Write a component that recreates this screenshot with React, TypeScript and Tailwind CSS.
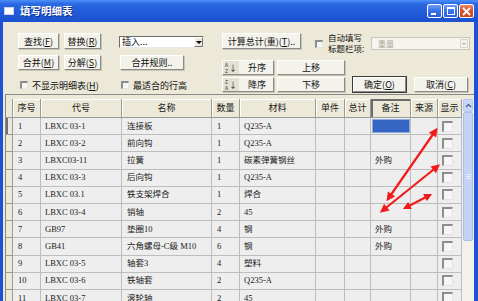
import type { ReactNode } from 'react';

const GRID = 'grid grid-cols-[7px_28px_81px_90px_28px_76px_29px_26px_40px_27px_24px]';

const rows = [
  ['1', 'LBXC 03-1', '连接板', '1', 'Q235-A', ''],
  ['2', 'LBXC 03-2', '前向钩', '1', 'Q235-A', ''],
  ['3', 'LBXC03-11', '拉簧', '1', '碳素弹簧钢丝', '外购'],
  ['4', 'LBXC 03-3', '后向钩', '1', 'Q235-A', ''],
  ['5', 'LBXC 03.1', '铁支架焊合', '1', '焊合', ''],
  ['6', 'LBXC 03-4', '销轴', '2', '45', ''],
  ['7', 'GB97', '垫圈10', '4', '钢', '外购'],
  ['8', 'GB41', '六角螺母-C级 M10', '6', '钢', '外购'],
  ['9', 'LBXC 03-5', '轴套3', '4', '塑料', ''],
  ['10', 'LBXC 03-6', '铁轴套', '2', 'Q235-A', ''],
  ['11', 'LBXC 03-7', '滚轮轴', '2', '45', ''],
];

const headers = ['序号', '代号', '名称', '数量', '材料', '单件', '总计', '备注', '来源', '显示'];

function Btn({ className = '', children, def = false }: { className?: string; children: ReactNode; def?: boolean }) {
  return (
    <div
      className={`flex shrink-0 items-center justify-center whitespace-nowrap bg-[#f3f2eb] border border-t-white border-l-white border-r-[#8a8a8a] border-b-[#8a8a8a] text-[9px] leading-none text-[#111] ${def ? 'shadow-[0_0_0_1px_#3a3a3a]' : 'shadow-[1px_1px_0_#c9c6b6]'} ${className}`}
    >
      {children}
    </div>
  );
}

function Acc({ k }: { k: string }) {
  return (
    <span>
      (<span className="underline">{k}</span>)
    </span>
  );
}

function Check({ className = '' }: { className?: string }) {
  return (
    <div
      className={`shrink-0 bg-[#f6f6f4] border-t-2 border-l-2 border-b border-r border-t-[#8d8d8d] border-l-[#8d8d8d] border-b-[#e4e4e4] border-r-[#e4e4e4] ${className}`}
    />
  );
}

function SortBtn({ up, label }: { up: boolean; label: string }) {
  return (
    <Btn className="w-[52px] h-[15px] justify-start">
      <div className="flex h-full w-[16px] items-center justify-center bg-[#e3e1d6]">
        <div className="flex flex-col items-center text-[5px] leading-[6px] text-[#333]">
          <span>{up ? 'A' : 'Z'}</span>
          <span>{up ? 'Z' : 'A'}</span>
        </div>
        <span className="ml-[1px] text-[8px] leading-none text-[#222]">↓</span>
      </div>
      <span className="ml-[9px]">{label}</span>
    </Btn>
  );
}

function TitleBtn({ kind }: { kind: 'min' | 'max' | 'close' }) {
  const bg =
    kind === 'close'
      ? 'bg-[linear-gradient(180deg,#ec8a6a_0%,#e0562e_40%,#c9441f_100%)]'
      : 'bg-[linear-gradient(180deg,#6d9cf8_0%,#3b74ea_45%,#2a5fdc_100%)]';
  return (
    <div className={`relative flex h-[14px] w-[15px] items-center justify-center rounded-[2px] border border-white ${bg}`}>
      {kind === 'min' && <div className="mt-[6px] mr-[3px] h-[2px] w-[5px] bg-white" />}
      {kind === 'max' && <div className="h-[8px] w-[8px] border border-t-2 border-white" />}
      {kind === 'close' && (
        <svg width="9" height="9" viewBox="0 0 9 9">
          <path d="M1 1 L8 8 M8 1 L1 8" stroke="white" strokeWidth="1.8" />
        </svg>
      )}
    </div>
  );
}

export default function App() {
  return (
    <div className="relative h-[301px] w-[478px] overflow-hidden bg-[#1d52d6] font-['Noto_Sans_CJK_SC',sans-serif]">
      {/* title bar */}
      <div className="flex h-[22px] items-center bg-[linear-gradient(180deg,#4d90f8_0%,#2b68e2_18%,#2159d8_60%,#1c51cf_100%)] px-[4px]">
        <div className="mr-[6px] h-[8px] w-[10px] border border-[#c9d4e8] bg-white" />
        <span className="text-[10.5px] font-bold text-white [text-shadow:1px_1px_0_#0c2f8a]">填写明细表</span>
        <div className="ml-auto flex gap-[1px]">
          <TitleBtn kind="min" />
          <TitleBtn kind="max" />
          <TitleBtn kind="close" />
        </div>
      </div>

      {/* body */}
      <div className="ml-[3px] mr-[4px] flex h-[279px] flex-col bg-[#ece9d8]">
        <div className="flex h-[72px] shrink-0 pl-[15px] pt-[11px]">
          {/* left block */}
          <div className="flex w-[187px] flex-col">
            <div className="flex h-[16px]">
              <Btn className="w-[41px] h-[16px]">
                查找<Acc k="F" />
              </Btn>
              <Btn className="ml-[5px] w-[37px] h-[16px]">
                替换<Acc k="R" />
              </Btn>
              <div className="ml-[18px] mt-[3px] flex h-[12px] w-[85px] border border-t-[#6e6e6e] border-l-[#6e6e6e] border-b-[#e8e8e8] border-r-[#e8e8e8] bg-white">
                <span className="flex-1 pl-[2px] text-[9px] leading-[10px] text-[#111]">插入...</span>
                <div className="flex w-[9px] items-center justify-center border border-t-white border-l-white border-b-[#7a7a7a] border-r-[#7a7a7a] bg-[#ece9d8]">
                  <div className="h-0 w-0 border-x-[3px] border-t-[3px] border-x-transparent border-t-black" />
                </div>
              </div>
            </div>
            <div className="mt-[6px] flex h-[15px]">
              <Btn className="w-[41px] h-[15px]">
                合并<Acc k="M" />
              </Btn>
              <Btn className="ml-[5px] w-[37px] h-[15px]">
                分解<Acc k="S" />
              </Btn>
              <Btn className="ml-[19px] w-[64px] h-[15px]">合并规则..</Btn>
            </div>
            <div className="mt-[10px] flex h-[10px] items-center text-[9px] leading-none text-[#111]">
              <div className="flex w-[101px] items-center">
                <Check className="ml-[2px] h-[8px] w-[8px]" />
                <span className="ml-[4px]">
                  不显示明细表<Acc k="H" />
                </span>
              </div>
              <Check className="ml-[2px] h-[8px] w-[8px]" />
              <span className="ml-[4px]">最适合的行高</span>
            </div>
          </div>

          {/* right block */}
          <div className="ml-[17px] flex flex-col">
            <div className="flex h-[16px] items-start">
              <Btn className="w-[79px] h-[16px]">
                计算总计(重)<Acc k="T" />..
              </Btn>
              <Check className="ml-[14px] mt-[7px] h-[8px] w-[8px]" />
              <div className="-mt-[1px] ml-[5px] w-[43px] text-[8.5px] leading-[11px] text-[#111]">
                <div>自动填写</div>
                <div>标题栏项:</div>
              </div>
              <div className="mt-[4px] flex h-[13px] w-[99px] border border-[#c9c7ba] bg-[#f5f4ef]">
                <span className="flex-1 pl-[6px] text-[8px] leading-[11px] text-[#aca899]">重量</span>
                <div className="m-[1px] flex w-[8px] items-center justify-center border border-[#d8d6cb] bg-[#f2f1ec]">
                  <div className="h-0 w-0 border-x-[2px] border-t-[2px] border-x-transparent border-t-[#b0ae9f]" />
                </div>
              </div>
            </div>
            <div className="mt-[11px] flex h-[15px]">
              <SortBtn up label="升序" />
              <Btn className="ml-[3px] w-[68px] h-[15px]">上移</Btn>
            </div>
            <div className="mt-[2px] flex h-[15px]">
              <SortBtn up={false} label="降序" />
              <Btn className="ml-[3px] w-[68px] h-[15px]">下移</Btn>
              <Btn def className="ml-[8px] w-[53px] h-[15px]">
                确定<Acc k="O" />
              </Btn>
              <Btn className="ml-[8px] w-[54px] h-[15px]">
                取消<Acc k="C" />
              </Btn>
            </div>
          </div>
        </div>

        {/* grid */}
        <div className="ml-[2px] flex flex-1 overflow-hidden border-t border-l border-[#8a8a8a] pt-[4px]">
          <div className="flex w-[456px] flex-col font-['Liberation_Serif','Noto_Sans_CJK_SC',serif] text-[8.5px] text-[#1a1a1a]">
            <div className={`${GRID} h-[19px] shrink-0`}>
              <div className="border-r border-b border-[#9a9a9a] bg-[#ece9d8]" />
              {headers.map((h) => (
                <div
                  key={h}
                  className={`flex items-center justify-center border-r border-b border-[#9a9a9a] bg-[#ece9d8] font-['Noto_Sans_CJK_SC',sans-serif] text-[9px] ${h === '备注' ? 'shadow-[inset_2px_2px_0_#6c6c6c]' : 'shadow-[inset_1px_1px_0_#ffffff]'}`}
                >
                  {h}
                </div>
              ))}
            </div>
            {rows.map((r, i) => (
              <div key={r[0]} className={`${GRID} h-[17.2px] shrink-0`}>
                <div className={`border-r border-b border-[#9a9a9a] bg-[#ece9d8] ${i === 0 ? 'shadow-[inset_2px_0_0_#707070]' : ''}`} />
                <div className="flex items-center border-r border-b border-[#bdbdbd] bg-[#eeeeee] pl-[5px]">{r[0]}</div>
                <div className="flex items-center border-r border-b border-[#bdbdbd] bg-[#eeeeee] pl-[4px] whitespace-nowrap">{r[1]}</div>
                <div className="flex items-center border-r border-b border-[#bdbdbd] bg-[#eeeeee] pl-[5px] whitespace-nowrap">{r[2]}</div>
                <div className="flex items-center border-r border-b border-[#bdbdbd] bg-[#eeeeee] pl-[5px]">{r[3]}</div>
                <div className="flex items-center border-r border-b border-[#bdbdbd] bg-[#eeeeee] pl-[4px] whitespace-nowrap">{r[4]}</div>
                <div className="border-r border-b border-[#bdbdbd] bg-[#eeeeee]" />
                <div className="border-r border-b border-[#bdbdbd] bg-[#eeeeee]" />
                <div className="flex items-center border-r border-b border-[#bdbdbd] bg-[#eeeeee] pl-[4px]">
                  {i === 0 ? <div className="-ml-[3px] h-[14px] w-[38px] border border-[#8fa9dc] bg-[#3666c4]" /> : r[5]}
                </div>
                <div className="border-r border-b border-[#bdbdbd] bg-[#eeeeee]" />
                <div className="flex items-center border-r border-b border-[#bdbdbd] bg-[#eeeeee] pl-[4px]">
                  <Check className="h-[11px] w-[11px]" />
                </div>
              </div>
            ))}
          </div>

          {/* scrollbar */}
          <div className="flex w-[12px] flex-col bg-[#f3f1ea]">
            <div className="mx-[1px] flex h-[13px] shrink-0 items-center justify-center rounded-[2px] border border-[#b4c6ef] bg-[#c7d7fb]">
              <svg width="7" height="5" viewBox="0 0 7 5">
                <path d="M1 4 L3.5 1.5 L6 4" fill="none" stroke="#4d6185" strokeWidth="1.4" />
              </svg>
            </div>
            <div className="mx-[1px] flex h-[129px] shrink-0 flex-col items-center justify-center gap-[1px] rounded-[2px] border border-[#a9bde9] bg-[#c4d4f8]">
              <div className="h-[1px] w-[5px] bg-[#eef3ff]" />
              <div className="h-[1px] w-[5px] bg-[#eef3ff]" />
              <div className="h-[1px] w-[5px] bg-[#eef3ff]" />
            </div>
          </div>
        </div>
      </div>

      {/* red annotation arrows */}
      <svg className="pointer-events-none absolute inset-0" width="478" height="301" viewBox="0 0 478 301">
        <defs>
          <marker id="ah" viewBox="0 0 10 10" refX="7" refY="5" markerWidth="4.5" markerHeight="4" orient="auto-start-reverse">
            <path d="M0 0 L10 5 L0 10 z" fill="#f21b1b" />
          </marker>
        </defs>
        <line x1="388" y1="199" x2="436" y2="130" stroke="#f21b1b" strokeWidth="2.2" markerStart="url(#ah)" markerEnd="url(#ah)" />
        <line x1="382" y1="211" x2="438" y2="166" stroke="#f21b1b" strokeWidth="2.2" markerStart="url(#ah)" markerEnd="url(#ah)" />
        <line x1="405" y1="208" x2="430" y2="195" stroke="#f21b1b" strokeWidth="2" markerStart="url(#ah)" markerEnd="url(#ah)" />
      </svg>
    </div>
  );
}
